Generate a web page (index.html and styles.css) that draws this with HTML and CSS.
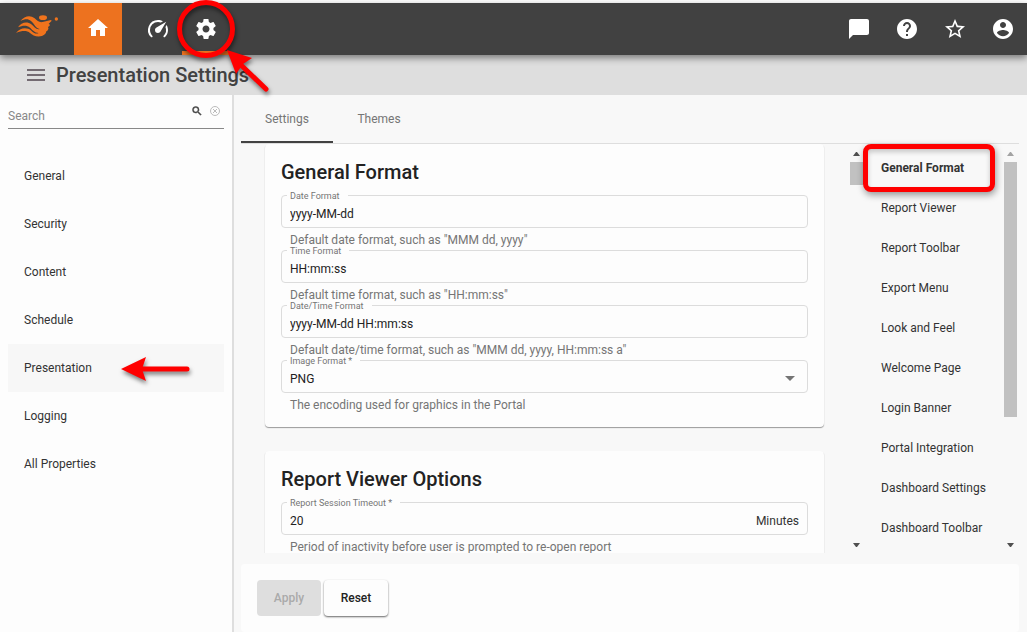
FILE: index.html
```html
<!DOCTYPE html>
<html lang="en">
<head>
<meta charset="utf-8">
<title>Presentation Settings</title>
<link rel="stylesheet" href="styles.css">
</head>
<body>
<header class="navbar">
  <a class="logo" href="#" aria-label="Portal">
    <svg width="44" height="24" viewBox="45 42 132 72">
      <g fill="#f0731c">
        <path d="M61 63C74 47 91 44 104 55C112 63 118 68 128 66L153 60Q156 61 154 64L146 71Q151 73 149 77L144 81Q148 86 142 92L139 94Q138 103 126 108C110 112 98 106 90 99C80 91 66 92 48 99C60 82 82 81 94 92C101 99 108 103 116 99C103 98 97 89 90 83C80 75 68 76 54 82C64 66 82 64 94 73C102 80 109 90 119 87C106 84 102 70 93 63C84 55 74 57 61 63z"/>
        <ellipse cx="129" cy="53" rx="12" ry="7"/><circle cx="169" cy="57" r="5"/>
      </g>
    </svg>
  </a>
  <nav class="nav-main">
    <a class="nav-icon home" href="#" aria-label="Home"><svg class="icon" viewBox="0 0 24 24"><path d="M10 20v-6h4v6h5v-8h3L12 3 2 12h3v8z"/></svg></a>
    <a class="nav-icon" href="#" aria-label="Monitoring"><svg class="icon" viewBox="0 0 24 24"><path d="M12 16a3 3 0 0 1-3-3c0-1.120.610-2.100 1.500-2.610l9.710-5.620-5.530 9.580C14.180 15.330 13.170 16 12 16M12 3c1.810 0 3.500.500 4.970 1.320l-2.100 1.210C14 5.190 13 5 12 5a8 8 0 0 0-8 8c0 2.210.890 4.210 2.340 5.650.400.400.400 1.020.010 1.410s-1.030.390-1.420.010A10 10 0 0 1 12 3m10 10c0 2.760-1.120 5.260-2.930 7.070-.390.380-1.020.380-1.410-.010s-.390-1.020 0-1.410A8 8 0 0 0 19.460 10.100L20.670 8C21.500 9.500 22 11.180 22 13"/></svg></a>
    <a class="nav-icon current" href="#" aria-label="Settings"><svg class="icon" viewBox="0 0 24 24"><path d="M19.430 12.980c.040-.320.070-.640.070-.980s-.030-.660-.070-.980l2.110-1.650c.190-.150.240-.420.120-.640l-2-3.460c-.120-.220-.390-.300-.610-.220l-2.490 1c-.520-.400-1.080-.730-1.690-.980l-.380-2.650C14.460 2.180 14.250 2 14 2h-4c-.250 0-.460.180-.490.420l-.380 2.650c-.610.250-1.170.590-1.690.980l-2.490-1c-.230-.090-.490 0-.610.220l-2 3.460c-.130.220-.070.490.120.640l2.110 1.650c-.040.320-.070.650-.070.980s.030.660.070.980l-2.110 1.650c-.190.150-.240.420-.120.640l2 3.460c.120.220.390.300.610.220l2.490-1c.520.400 1.080.730 1.690.980l.380 2.650c.030.240.240.420.490.420h4c.250 0 .460-.180.490-.420l.380-2.650c.610-.250 1.170-.590 1.690-.980l2.490 1c.230.090.490 0 .610-.220l2-3.460c.120-.220.070-.490-.120-.640zM12 15.500c-1.930 0-3.500-1.570-3.500-3.500s1.570-3.500 3.500-3.500 3.500 1.570 3.500 3.500-1.570 3.500-3.500 3.500"/></svg></a>
  </nav>
  <div class="nav-tools">
    <button class="nav-icon" aria-label="Messages"><svg class="icon" viewBox="0 0 24 24"><path d="M20 2H4c-1.100 0-1.990.900-1.990 2L2 22l4-4h14c1.100 0 2-.900 2-2V4c0-1.100-.900-2-2-2"/></svg></button>
    <button class="nav-icon" aria-label="Help"><svg class="icon" viewBox="0 0 24 24"><path d="M12 2C6.480 2 2 6.480 2 12s4.480 10 10 10 10-4.480 10-10S17.520 2 12 2m1 17h-2v-2h2zm2.070-7.750-.900.920C13.450 12.900 13 13.500 13 15h-2v-.500c0-1.100.450-2.100 1.170-2.830l1.240-1.260c.370-.360.590-.860.590-1.410 0-1.100-.900-2-2-2s-2 .900-2 2H8c0-2.210 1.790-4 4-4s4 1.790 4 4c0 .880-.360 1.680-.930 2.250"/></svg></button>
    <button class="nav-icon" aria-label="Favorites"><svg class="icon" viewBox="0 0 24 24"><path d="m22 9.240-7.190-.620L12 2 9.190 8.630 2 9.240l5.460 4.730L5.820 21 12 17.270 18.180 21l-1.630-7.030zM12 15.400l-3.760 2.270 1-4.280-3.320-2.880 4.380-.380L12 6.100l1.710 4.040 4.380.380-3.320 2.880 1 4.280z"/></svg></button>
    <button class="nav-icon" aria-label="Account"><svg class="icon" viewBox="0 0 24 24"><path d="M12 2C6.480 2 2 6.480 2 12s4.480 10 10 10 10-4.480 10-10S17.520 2 12 2m0 3c1.660 0 3 1.340 3 3s-1.340 3-3 3-3-1.340-3-3 1.340-3 3-3m0 14.200c-2.500 0-4.710-1.280-6-3.220.030-1.990 4-3.080 6-3.080 1.990 0 5.970 1.090 6 3.080-1.290 1.940-3.500 3.220-6 3.220"/></svg></button>
  </div>
</header>
<div class="titlebar">
  <button class="menu" aria-label="Toggle menu"><svg width="18" height="12" viewBox="0 0 18 12"><path d="M0 0h18v2H0zM0 5h18v2H0zM0 10h18v2H0z" fill="#746b72"/></svg></button>
  <h1>Presentation Settings</h1>
</div>
<div class="workspace">
  <aside class="sidebar">
    <div class="search">
      <input type="text" placeholder="Search" aria-label="Search">
      <button aria-label="Find"><svg width="12" height="12" viewBox="0 0 24 24"><path fill="#444" stroke="#444" d="M15.500 14h-.790l-.280-.270A6.470 6.470 0 0 0 16 9.500 6.500 6.500 0 1 0 9.500 16c1.610 0 3.090-.590 4.230-1.570l.270.280v.790l5 4.990L20.490 19zm-6 0a4.500 4.500 0 1 1 0-9 4.500 4.500 0 0 1 0 9"/></svg></button>
      <button aria-label="Clear"><svg width="12" height="12" viewBox="0 0 12 12" fill="none" stroke="#bbb"><circle cx="6" cy="6" r="4.500"/><path d="m4 4 4 4M8 4 4 8"/></svg></button>
    </div>
    <nav class="side-nav">
      <a href="#">General</a>
      <a href="#">Security</a>
      <a href="#">Content</a>
      <a href="#">Schedule</a>
      <a href="#" class="selected">Presentation</a>
      <a href="#">Logging</a>
      <a href="#">All Properties</a>
    </nav>
  </aside>
  <main class="content">
    <div class="tabs" role="tablist">
      <button role="tab" aria-selected="true" class="active">Settings</button>
      <button role="tab" aria-selected="false">Themes</button>
    </div>
    <div class="panes">
      <div class="forms">
        <section class="card">
          <h2>General Format</h2>
          <div class="field"><div class="box"><label for="date">Date Format</label><input id="date" type="text" value="yyyy-MM-dd"></div><p>Default date format, such as "MMM dd, yyyy"</p></div>
          <div class="field"><div class="box"><label for="time">Time Format</label><input id="time" type="text" value="HH:mm:ss"></div><p>Default time format, such as "HH:mm:ss"</p></div>
          <div class="field"><div class="box"><label for="datetime">Date/Time Format</label><input id="datetime" type="text" value="yyyy-MM-dd HH:mm:ss"></div><p>Default date/time format, such as "MMM dd, yyyy, HH:mm:ss a"</p></div>
          <div class="field"><div class="box"><label for="image">Image Format *</label><select id="image"><option>PNG</option></select><svg class="caret" width="10" height="5" viewBox="0 0 10 5"><path d="M0 0h10L5 5z" fill="#757575"/></svg></div><p>The encoding used for graphics in the Portal</p></div>
        </section>
        <section class="card">
          <h2>Report Viewer Options</h2>
          <div class="field"><div class="box"><label for="timeout">Report Session Timeout *</label><input id="timeout" type="text" value="20"><span>Minutes</span></div><p>Period of inactivity before user is prompted to re-open report</p></div>
        </section>
      </div>
      <div class="scrollbar" aria-hidden="true">
        <svg class="arrow" viewBox="0 0 7 4"><path d="M0 4h7L4 0H3z"/></svg>
        <div class="track"><div class="thumb short"></div></div>
        <svg class="arrow" viewBox="0 0 7 4"><path d="M0 0h7L4 4H3z"/></svg>
      </div>
      <nav class="toc">
        <a href="#" class="here">General Format</a>
        <a href="#">Report Viewer</a>
        <a href="#">Report Toolbar</a>
        <a href="#">Export Menu</a>
        <a href="#">Look and Feel</a>
        <a href="#">Welcome Page</a>
        <a href="#">Login Banner</a>
        <a href="#">Portal Integration</a>
        <a href="#">Dashboard Settings</a>
        <a href="#">Dashboard Toolbar</a>
      </nav>
      <div class="scrollbar" aria-hidden="true">
        <svg class="arrow dim" viewBox="0 0 7 4"><path d="M0 4h7L4 0H3z"/></svg>
        <div class="track"><div class="thumb long"></div></div>
        <svg class="arrow" viewBox="0 0 7 4"><path d="M0 0h7L4 4H3z"/></svg>
      </div>
    </div>
    <footer class="actions">
      <button class="apply" disabled>Apply</button>
      <button class="reset">Reset</button>
    </footer>
  </main>
</div>
<svg class="callout callout-gear" width="100" height="100" viewBox="0 0 100 100">
  <circle cx="36" cy="29" r="26.500" fill="none" stroke="red" stroke-width="5"/>
  <path d="M96 89 72 66" stroke="red" stroke-width="5" stroke-linecap="round"/>
  <path d="m57 50 25 8-9 6-7 10z" fill="red"/>
</svg>
<svg class="callout callout-nav" width="72" height="30" viewBox="0 0 72 30">
  <path d="M20 15h46" stroke="red" stroke-width="5" stroke-linecap="round"/>
  <path d="M0 15 25 3l-4 12 4 12z" fill="red"/>
</svg>
</body>
</html>
```
FILE: styles.css
```css
* { box-sizing: border-box; }
body {
  margin: 0;
  padding-top: 3px;
  height: 100vh;
  display: flex;
  flex-direction: column;
  overflow: hidden;
  background: #fdfdfd;
  color: #333;
  font: 12px/16px Roboto, "Liberation Sans", sans-serif;
}
button, input, select { font: inherit; color: inherit; border: 0; padding: 0; margin: 0; background: none; }
a { color: inherit; text-decoration: none; }
h1, h2, p { margin: 0; }
svg { display: block; }

.navbar {
  display: flex;
  flex: none;
  height: 52px;
  background: #414141;
  color: #fff;
  position: relative;
  z-index: 1;
  box-shadow: 0 3px 7px rgba(0, 0, 0, .45);
}
.logo { width: 74px; padding: 11px 0 0 15px; }
.nav-main { display: flex; }
.nav-tools { display: flex; margin-left: auto; }
.nav-icon { width: 48px; height: 52px; display: grid; place-items: center; }
.home { background: #ed721f; margin-right: 12px; padding-bottom: 2px; }
.current { border-bottom: 4px solid #ed721f; padding-top: 4px; }
.icon { width: 24px; height: 24px; fill: currentColor; }

.titlebar {
  flex: none;
  height: 40px;
  display: flex;
  align-items: center;
  gap: 11px;
  padding-left: 27px;
  background: #dedede;
}
h1 { font-size: 20px; line-height: 24px; font-weight: 500; color: #424242; }

.workspace { flex: 1; min-height: 0; display: flex; }
.sidebar { width: 234px; flex: none; padding: 0 8px; border-right: 2px solid #dedede; }
.search {
  display: flex;
  gap: 6px;
  height: 34px;
  padding: 10px 3px 0 0;
  border-bottom: 1px solid #888;
}
.search input { flex: 1; min-width: 0; height: 22px; outline: 0; }
.search input::placeholder { color: #888; opacity: 1; }
.search button { height: 12px; }
.side-nav { padding-top: 23px; }
.side-nav a { display: block; padding: 16px; }
.side-nav .selected { background: #f7f7f7; }

.content {
  flex: 1;
  min-width: 0;
  display: flex;
  flex-direction: column;
  padding: 0 8px 0 7px;
  background: #f8f8f8;
}
.tabs { display: flex; flex: none; height: 49px; border-bottom: 1px solid #dedede; color: #757575; }
.tabs button { width: 92px; height: 48px; }
.tabs .active { border-bottom: 2px solid #424242; padding-top: 2px; }
.panes { flex: 1; min-height: 0; display: flex; padding-right: 2px; }
.forms { flex: 1; min-width: 0; overflow: hidden; padding: 0 26px 0 24px; }
.card {
  padding: 16px 16px 12px;
  margin-bottom: 24px;
  border-radius: 4px;
  background: #fdfdfd;
  box-shadow: 0 1px 1px #999;
}
h2 { font-size: 20px; line-height: 24px; font-weight: 500; color: #222; margin-bottom: 11px; }
.box {
  position: relative;
  display: flex;
  align-items: center;
  height: 33px;
  padding: 4px 8px 0;
  border: 1px solid #dcdcdc;
  border-radius: 4px;
}
.box label {
  position: absolute;
  left: 5px;
  top: -6px;
  padding: 0 8px 0 3px;
  background: #fdfdfd;
  color: #757575;
  font-size: 9px;
  line-height: 12px;
}
.box input, .box select { flex: 1; min-width: 0; height: 20px; outline: 0; appearance: none; color: #222; }
.caret { margin-right: 4px; }
.field p { padding: 4px 9px 2px; color: #757575; }

.scrollbar { width: 13px; flex: none; display: flex; flex-direction: column; align-items: center; padding: 8px 0 6px; }
.arrow { width: 7px; height: 4px; flex: none; fill: #505050; }
.arrow.dim { fill: #a3a3a3; }
.track { flex: 1; width: 100%; padding: 6px 0; }
.thumb { background: #c1c1c1; }
.short { height: 6%; }
.long { height: 68%; }
.toc { width: 141px; flex: none; padding: 4px 0 0 4px; }
.toc a { display: block; padding: 12px 14px; }
.toc .here {
  width: 124px;
  font-weight: 700;
  border-radius: 4px;
  outline: 5px solid red;
  outline-offset: -1px;
  box-shadow: 1px 3px 7px 4px rgba(0, 0, 0, .4), inset 0 3px 5px 1px rgba(0, 0, 0, .2);
}
.actions {
  flex: none;
  display: flex;
  gap: 3px;
  margin-top: 11px;
  padding: 16px;
  border-radius: 4px;
  background: #fdfdfd;
}
.actions button { width: 64px; height: 36px; border-radius: 4px; font-weight: 500; }
.actions .apply { background: #dedede; color: #aaa; }
.actions .reset { color: #222; box-shadow: 0 1px 2px rgba(0, 0, 0, .6); }

.callout { position: absolute; z-index: 2; overflow: visible; pointer-events: none; filter: drop-shadow(1px 3px 2px rgba(0, 0, 0, .5)); }
.callout-gear { left: 170px; top: 0; }
.callout-nav { left: 121px; top: 354px; }
```
